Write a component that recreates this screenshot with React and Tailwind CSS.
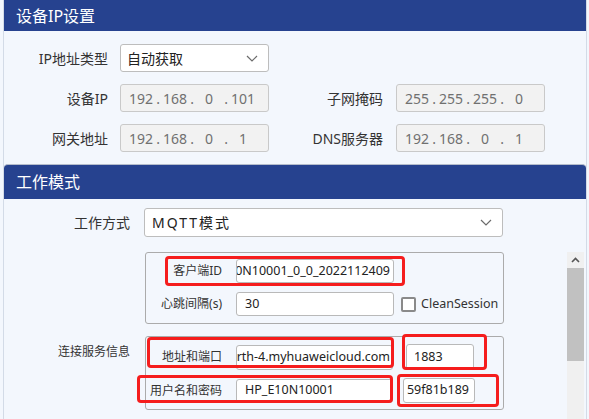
import React from 'react';

const font = "font-['Noto_Sans','Noto_Sans_CJK_SC',sans-serif]";

function Chevron() {
  return (
    <svg width="12" height="7" viewBox="0 0 12 7" className="shrink-0">
      <polyline points="1,1 6,6 11,1" fill="none" stroke="#6b6b6b" strokeWidth="1.2" />
    </svg>
  );
}

function IpBox({ parts }) {
  return (
    <div className="flex h-[28px] w-[149px] items-center rounded-[3px] border border-[#c9c9c9] bg-[#f2f2f2] pl-[3px] text-[14px] text-[#707070]">
      {parts.map((p, i) => (
        <React.Fragment key={i}>
          {i > 0 && <span className="flex w-0 justify-center">.</span>}
          <span className="w-[34px] text-center">{p}</span>
        </React.Fragment>
      ))}
    </div>
  );
}

function Field({ children, className = '' }) {
  return (
    <div className={`flex items-center overflow-hidden rounded-[3px] border border-[#b9b9b9] bg-white text-[12.5px] text-[#222] ${className}`}>
      {children}
    </div>
  );
}

function RedBox({ className }) {
  return <div className={`pointer-events-none absolute rounded-[4px] border-[3px] border-[#f51d1d] ${className}`} />;
}

export default function App() {
  return (
    <div className={`h-[419px] w-[589px] overflow-hidden bg-[#f3f7fd] ${font}`}>
      {/* 设备IP设置 */}
      <div className="ml-[3px] h-[164px] w-[584px] border-x border-[#d3dbe7]">
        <div className="flex h-[31px] items-center bg-[#26428f] pl-[12px] text-[16px] text-white">设备IP设置</div>
        <div className="pt-[13px] text-[14px] text-[#333]">
          <div className="flex items-center">
            <div className="w-[104px] text-right">IP地址类型</div>
            <div className="ml-[12px] flex h-[28px] w-[149px] items-center justify-between rounded-[3px] border border-[#bdbdbd] bg-white pl-[6px] pr-[10px] text-[14px] text-[#222]">
              <span>自动获取</span>
              <Chevron />
            </div>
          </div>
          <div className="mt-[12px] flex items-center">
            <div className="w-[104px] text-right">设备IP</div>
            <div className="ml-[12px]"><IpBox parts={['192', '168', '0', '101']} /></div>
            <div className="w-[114px] text-right">子网掩码</div>
            <div className="ml-[13px]"><IpBox parts={['255', '255', '255', '0']} /></div>
          </div>
          <div className="mt-[12px] flex items-center">
            <div className="w-[104px] text-right">网关地址</div>
            <div className="ml-[12px]"><IpBox parts={['192', '168', '0', '1']} /></div>
            <div className="w-[114px] text-right">DNS服务器</div>
            <div className="ml-[13px]"><IpBox parts={['192', '168', '0', '1']} /></div>
          </div>
        </div>
      </div>

      {/* 工作模式 */}
      <div className="ml-[3px] w-[584px] border-x border-[#d3dbe7]">
        <div className="flex h-[35px] items-center rounded-t-[4px] border-t border-[#b4bccb] bg-[#26428f] pl-[12px] text-[16px] text-white">工作模式</div>
        <div className="flex items-center pt-[9px] text-[14px] text-[#333]">
          <div className="w-[126px] text-right">工作方式</div>
          <div className="ml-[14px] flex h-[29px] w-[359px] items-center justify-between rounded-[3px] border border-[#bdbdbd] bg-white pl-[7px] pr-[10px] text-[#222]">
            <span className="tracking-[2px]">MQTT模式</span>
            <Chevron />
          </div>
        </div>

        <div className="mt-[15px] flex">
          <div className="relative w-[563px] text-[12px] text-[#333]">
            <div className="ml-[141px] w-[359px] rounded-[3px] border border-[#ababab] pb-[7px] pt-[6px]">
              <div className="flex items-center">
                <div className="w-[76px] text-right">客户端ID</div>
                <Field className="ml-[14px] h-[24px] w-[158px] justify-end pr-[3px]">
                  <span className="whitespace-nowrap">HP_E10N10001_0_0_2022112409</span>
                </Field>
              </div>
              <div className="mt-[9px] flex items-center">
                <div className="w-[76px] text-right">心跳间隔(s)</div>
                <Field className="ml-[14px] h-[24px] w-[158px] pl-[8px]">30</Field>
                <div className="ml-[7px] h-[15px] w-[15px] rounded-[2px] border-2 border-[#8a8a8a] bg-white" />
                <span className="ml-[5px] text-[12.5px] text-[#333]">CleanSession</span>
              </div>
            </div>

            <div className="mt-[12px] flex">
              <div className="w-[141px] pr-[15px] pt-[7px] text-right">连接服务信息</div>
              <div className="w-[359px] rounded-[3px] border border-[#ababab] pb-[6px] pt-[7px]">
                <div className="flex items-center">
                  <div className="w-[76px] text-right">地址和端口</div>
                  <Field className="ml-[14px] h-[25px] w-[157px] justify-end pr-[2px]">
                    <span className="whitespace-nowrap">mqtt-north-4.myhuaweicloud.com</span>
                  </Field>
                  <Field className="ml-[13px] h-[26px] w-[68px] pl-[7px]">1883</Field>
                </div>
                <div className="mt-[8px] flex items-center">
                  <div className="w-[76px] text-right">用户名和密码</div>
                  <Field className="ml-[14px] h-[24px] w-[157px] pl-[8px]">HP_E10N10001</Field>
                  <Field className="ml-[10px] h-[25px] w-[72px] justify-end pr-[5px]">
                    <span className="whitespace-nowrap">59f81b189</span>
                  </Field>
                </div>
              </div>
            </div>

            <div className="ml-[141px] mt-[11px] h-[20px] w-[359px] rounded-t-[3px] border border-b-0 border-[#ababab]" />

            <RedBox className="left-[161px] top-[4px] h-[30px] w-[240px]" />
            <RedBox className="left-[143px] top-[85px] h-[31px] w-[247px]" />
            <RedBox className="left-[398px] top-[82px] h-[36px] w-[85px]" />
            <RedBox className="left-[133px] top-[123px] h-[28px] w-[256px]" />
            <RedBox className="left-[393px] top-[122px] h-[33px] w-[102px]" />
          </div>

          <div className="flex w-[17px] flex-col bg-[#f0f0f0]">
            <div className="flex h-[16px] items-center justify-center">
              <svg width="9" height="6" viewBox="0 0 9 6">
                <polyline points="1,5 4.5,1.5 8,5" fill="none" stroke="#555" strokeWidth="1.6" />
              </svg>
            </div>
            <div className="h-[93px] bg-[#c1c1c1]" />
            <div className="h-[80px]" />
          </div>
        </div>
      </div>
    </div>
  );
}
